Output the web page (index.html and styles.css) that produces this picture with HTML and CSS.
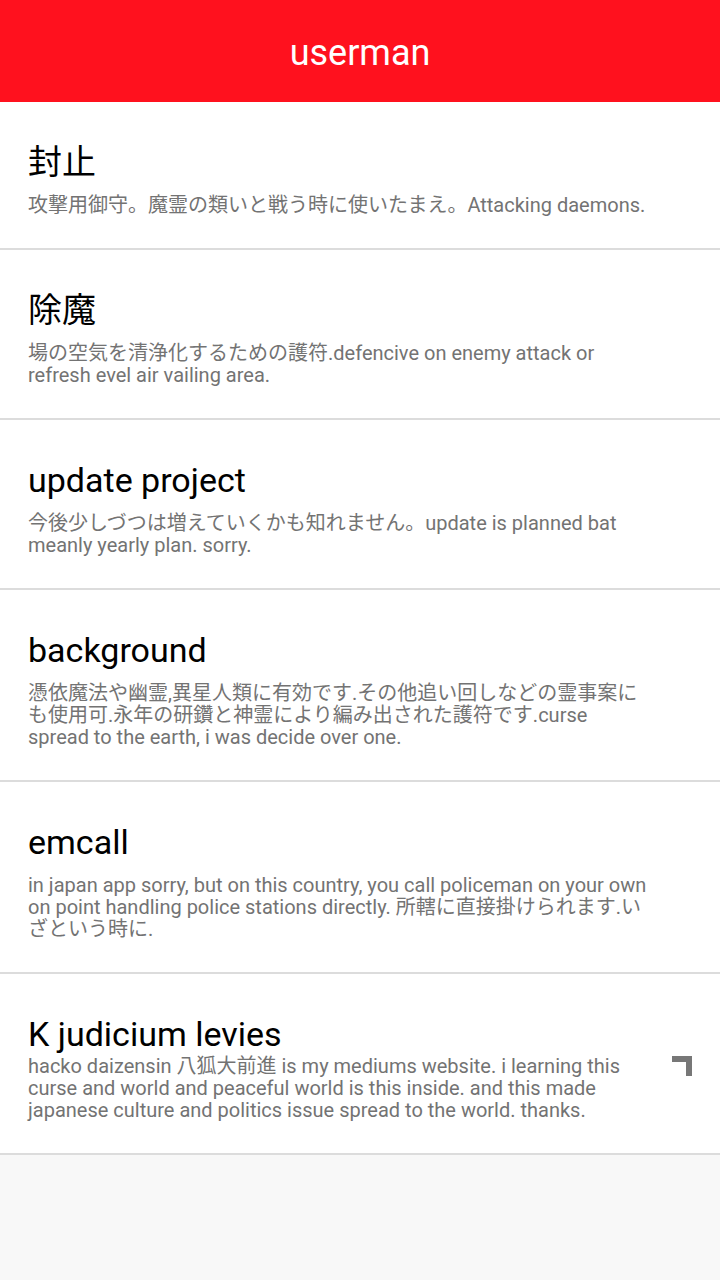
FILE: index.html
```html
<!DOCTYPE html>
<html lang="ja">
<head>
<meta charset="utf-8">
<title>userman</title>
<link rel="stylesheet" href="styles.css">
</head>
<body>
<header class="appbar">
  <h1 class="appbar-title">userman</h1>
</header>
<main class="list">
  <section class="item">
    <div class="item-text">
      <h2 class="item-title">封止</h2>
      <p class="item-desc">攻撃用御守。魔霊の類いと戦う時に使いたまえ。Attacking daemons.</p>
    </div>
  </section>
  <section class="item">
    <div class="item-text">
      <h2 class="item-title">除魔</h2>
      <p class="item-desc">場の空気を清浄化するための護符.defencive on enemy attack or refresh evel air vailing area.</p>
    </div>
  </section>
  <section class="item">
    <div class="item-text">
      <h2 class="item-title">update project</h2>
      <p class="item-desc">今後少しづつは増えていくかも知れません。update is planned bat meanly yearly plan. sorry.</p>
    </div>
  </section>
  <section class="item">
    <div class="item-text">
      <h2 class="item-title">background</h2>
      <p class="item-desc">憑依魔法や幽霊,異星人類に有効です.その他追い回しなどの霊事案にも使用可.永年の研鑽と神霊により編み出された護符です.curse spread to the earth, i was decide over one.</p>
    </div>
  </section>
  <section class="item">
    <div class="item-text">
      <h2 class="item-title">emcall</h2>
      <p class="item-desc">in japan app sorry, but on this country, you call policeman on your own on point handling police stations directly. 所轄に直接掛けられます.いざという時に.</p>
    </div>
  </section>
  <section class="item item-link">
    <div class="item-text">
      <h2 class="item-title">K judicium levies</h2>
      <p class="item-desc item-desc-tight">hacko daizensin 八狐大前進 is my mediums website. i learning this curse and world and peaceful world is this inside. and this made japanese culture and politics issue spread to the world. thanks.</p>
    </div>
    <svg class="item-icon" width="20" height="20" viewBox="0 0 20 20" aria-hidden="true">
      <path d="M0 0H20V20H14V6H0Z" fill="#777777"/>
    </svg>
  </section>
</main>
</body>
</html>
```

FILE: styles.css
```css
html, body {
  margin: 0;
  padding: 0;
}

body {
  background: #f8f8f8;
  font-family: Roboto, "Noto Sans CJK JP", sans-serif;
  min-height: 1280px;
}

.appbar {
  height: 102px;
  box-sizing: border-box;
  padding-top: 3px;
  background: #ff111e;
  display: flex;
  align-items: center;
  justify-content: center;
}

.appbar-title {
  margin: 0;
  color: #ffffff;
  font-size: 36px;
  font-weight: 400;
  line-height: 40px;
}

.list {
  display: flex;
  flex-direction: column;
}

.item {
  background: #ffffff;
  border-bottom: 2px solid #dcdcdc;
  padding: 40px 28px 32px 28px;
  display: flex;
  align-items: center;
  gap: 12px;
}

.item-text {
  flex: 1;
  min-width: 0;
  max-width: 620px;
}

.item-title {
  margin: 0;
  font-size: 34px;
  font-weight: 400;
  line-height: 40px;
  color: #000000;
}

.item-desc {
  margin: 12px 0 0 0;
  font-size: 20px;
  line-height: 22px;
  color: #737373;
}

.item-desc-tight {
  margin-top: 1px;
}

.item-link {
  justify-content: space-between;
}

.item-icon {
  flex: none;
  align-self: center;
  margin-top: -4px;
}
```
